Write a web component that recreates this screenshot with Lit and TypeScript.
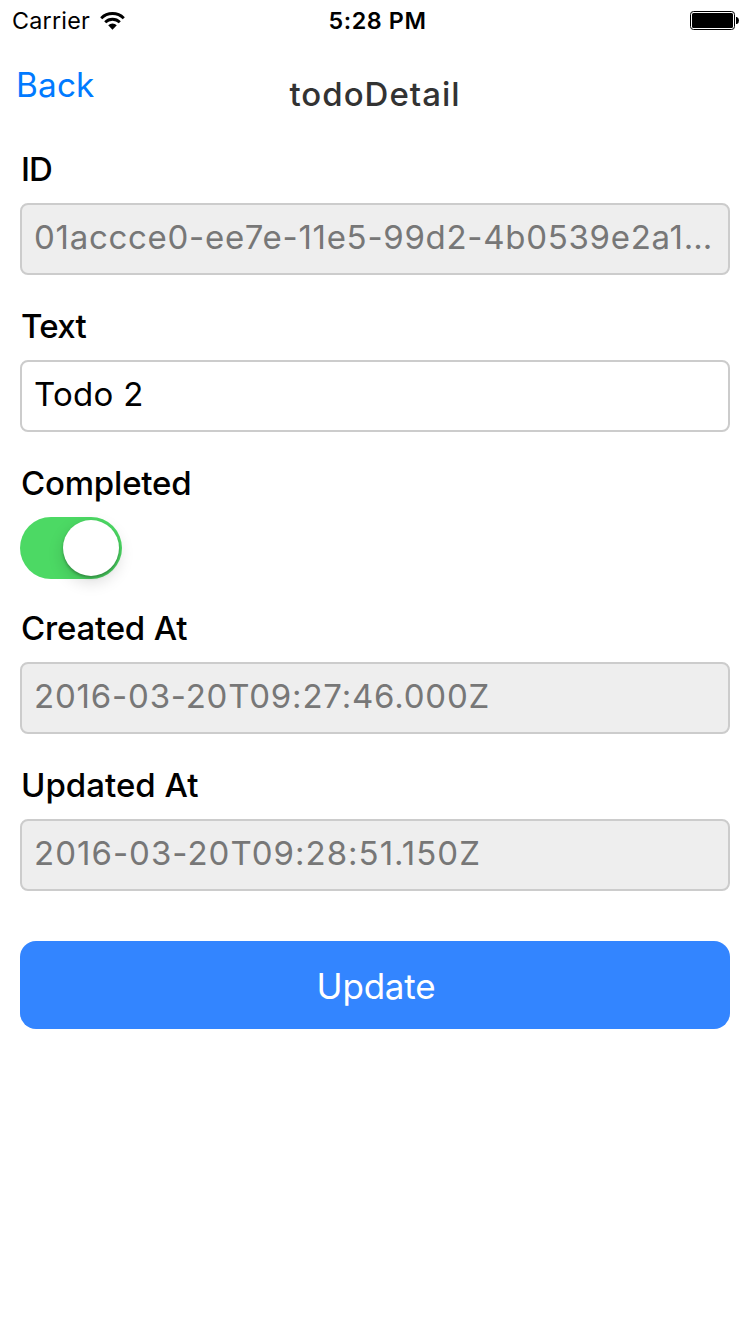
import { LitElement, html, css } from "lit";
import { customElement, property } from "lit/decorators.js";

@customElement("status-bar")
class StatusBar extends LitElement {
  static styles = css`
    :host { display: grid; grid-template-columns: 1fr auto 1fr; align-items: center; height: 40px; padding: 1px 11px 0 12px; box-sizing: border-box; font-size: 23.3px; color: #000; }
    .left { display: flex; align-items: center; gap: 10px; letter-spacing: 0.25px; }
    .time { font-weight: 600; letter-spacing: 0.6px; padding-left: 4px; }
    .right { display: flex; justify-content: flex-end; }
    svg { display: block; }
  `;
  render() {
    return html`
      <div class="left"><span class="carrier">Carrier</span>
        <svg width="25" height="18" viewBox="0 0 25 18">
          <path d="M12.5 17.8 L8.2 13.2 A6.2 6.2 0 0 1 16.8 13.2 Z" fill="#000"/>
          <path d="M5.2 10.3 A10.3 10.3 0 0 1 19.8 10.3" fill="none" stroke="#000" stroke-width="2.8"/>
          <path d="M1.2 6.2 A16 16 0 0 1 23.8 6.2" fill="none" stroke="#000" stroke-width="2.9"/>
        </svg>
      </div>
      <div class="time">5:28 PM</div>
      <div class="right">
        <svg width="49" height="19" viewBox="0 0 49 19">
          <rect x="0.5" y="0.5" width="44" height="18" rx="3" fill="none" stroke="#000"/>
          <rect x="2" y="2" width="41" height="15" rx="1.5" fill="#000"/>
          <path d="M46 6 h1 q2 1 2 3.5 t-2 3.5 h-1 z" fill="#000"/>
        </svg>
      </div>`;
  }
}

@customElement("form-field")
class FormField extends LitElement {
  @property() label = "";
  @property() value = "";
  @property({ type: Boolean }) disabled = false;
  static styles = css`
    :host { display: block; font-size: 33px; }
    .label { line-height: 40px; font-weight: 500; margin: 0 0 14px 1px; letter-spacing: var(--label-spacing, 0); }
    .box { height: 72px; box-sizing: border-box; border: 2px solid #ccc; border-radius: 8px; padding: 0 12px; line-height: 64px; color: #000; background: #fff; white-space: nowrap; overflow: hidden; letter-spacing: var(--value-spacing, 0.8px); }
    .disabled { color: #777; background: #eee; }
  `;
  render() {
    return html`
      <div class="label">${this.label}</div>
      <div class="box ${this.disabled ? "disabled" : ""}">${this.value}</div>`;
  }
}

@customElement("toggle-switch")
class ToggleSwitch extends LitElement {
  static styles = css`
    :host { display: block; }
    .track { display: flex; justify-content: flex-end; align-items: center; box-sizing: border-box; width: 102px; height: 62px; padding: 3px; border-radius: 31px; background: #4cd964; }
    .thumb { width: 56px; height: 56px; border-radius: 50%; background: #fff; box-shadow: 0 2px 3px rgba(0,0,0,.28), 0 6px 16px rgba(0,0,0,.15); }
  `;
  render() {
    return html`<div class="track"><div class="thumb"></div></div>`;
  }
}

@customElement("app-root")
class AppRoot extends LitElement {
  static styles = css`
    :host { display: flex; flex-direction: column; height: 1334px; background: #fff; color: #000; font-family: Inter, "Liberation Sans", sans-serif; font-kerning: normal; }
    .nav { display: grid; grid-template-columns: 1fr auto 1fr; height: 88px; padding: 0 16px; }
    .back { color: #007aff; font-size: 33.3px; line-height: 40px; margin-top: 25px; letter-spacing: 0.2px; }
    .title { color: #333; font-size: 33px; font-weight: 500; line-height: 40px; margin-top: 34px; letter-spacing: 1px; }
    .form { display: flex; flex-direction: column; gap: 31px; padding: 21px 20px 0; }
    .toggle { display: flex; flex-direction: column; gap: 14px; margin-bottom: -2px; }
    .label { font-size: 33px; font-weight: 500; line-height: 40px; margin-left: 1px; letter-spacing: -0.2px; }
    .update { margin-top: 19px; height: 88px; padding: 4px 0 0 2px; box-sizing: border-box; border-radius: 16px; background: #3385ff; color: #fff; text-align: center; font-size: 35px; line-height: 82px; letter-spacing: -0.2px; }
    .id { --label-spacing: -1px; --value-spacing: 0.71px; }
    .text { --label-spacing: -0.7px; --value-spacing: 0.3px; }
    .created { --label-spacing: -0.2px; --value-spacing: 0.8px; }
    .updated { --value-spacing: 1.02px; }
  `;
  render() {
    return html`
      <status-bar></status-bar>
      <div class="nav"><div class="back">Back</div><div class="title">todoDetail</div></div>
      <div class="form">
        <form-field class="id" label="ID" value="01accce0-ee7e-11e5-99d2-4b0539e2a1…" disabled></form-field>
        <form-field class="text" label="Text" value="Todo 2"></form-field>
        <div class="toggle"><div class="label">Completed</div><toggle-switch></toggle-switch></div>
        <form-field class="created" label="Created At" value="2016-03-20T09:27:46.000Z" disabled></form-field>
        <form-field class="updated" label="Updated At" value="2016-03-20T09:28:51.150Z" disabled></form-field>
        <div class="update">Update</div>
      </div>`;
  }
}
